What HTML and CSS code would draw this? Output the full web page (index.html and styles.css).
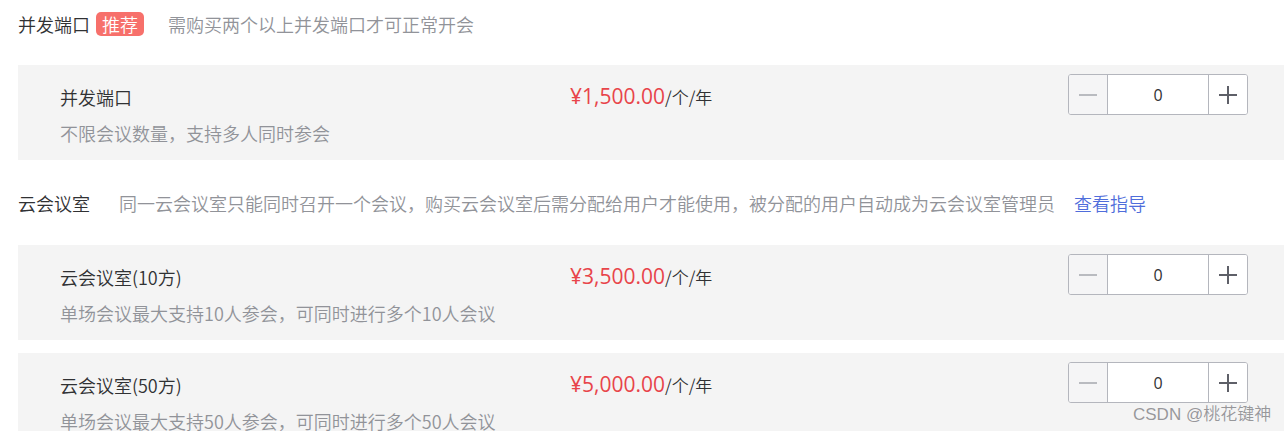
FILE: index.html
```html
<!DOCTYPE html>
<html>
<head lang="zh-CN">
    <meta charset="UTF-8">
    <title>购买配置</title>
    <link rel="stylesheet" href="styles.css">
</head>
<body>
<div class="page">
    <div class="group-head first">
        <span class="group-title">并发端口</span>
        <span class="tag">推荐</span>
        <span class="group-tip tip-port">需购买两个以上并发端口才可正常开会</span>
    </div>
    <div class="item">
        <div class="item-info">
            <div class="item-name">并发端口</div>
            <div class="item-desc">不限会议数量，支持多人同时参会</div>
        </div>
        <div class="item-price"><span class="money">¥1,500.00</span>/个/年</div>
        <div class="stepper">
            <span class="step minus"></span>
            <input class="step-input" type="text" value="0">
            <span class="step plus"></span>
        </div>
    </div>

    <div class="group-head">
        <span class="group-title">云会议室</span>
        <span class="group-tip tip-room">同一云会议室只能同时召开一个会议，购买云会议室后需分配给用户才能使用，被分配的用户自动成为云会议室管理员</span>
        <a class="guide" href="#">查看指导</a>
    </div>
    <div class="item">
        <div class="item-info">
            <div class="item-name">云会议室(10方)</div>
            <div class="item-desc">单场会议最大支持10人参会，可同时进行多个10人会议</div>
        </div>
        <div class="item-price"><span class="money">¥3,500.00</span>/个/年</div>
        <div class="stepper">
            <span class="step minus"></span>
            <input class="step-input" type="text" value="0">
            <span class="step plus"></span>
        </div>
    </div>
    <div class="item">
        <div class="item-info">
            <div class="item-name">云会议室(50方)</div>
            <div class="item-desc">单场会议最大支持50人参会，可同时进行多个50人会议</div>
        </div>
        <div class="item-price"><span class="money">¥5,000.00</span>/个/年</div>
        <div class="stepper">
            <span class="step minus"></span>
            <input class="step-input" type="text" value="0">
            <span class="step plus"></span>
        </div>
    </div>
</div>
<div class="watermark">CSDN @桃花键神</div>
</body>
</html>
```

FILE: styles.css
```css
html, body {
    margin: 0;
    padding: 0;
    background-color: #ffffff;
    overflow: hidden;
}

body {
    font-family: "Noto Sans CJK SC", "Liberation Sans", sans-serif;
    font-weight: 350;
    color: #303133;
    font-size: 18px;
}

.page {
    padding-left: 18px;
}

.group-head {
    display: flex;
    align-items: center;
    height: 48px;
    margin-top: 19px;
    margin-bottom: 18px;
    line-height: 24px;
}

.group-head.first {
    margin-top: 0;
    margin-bottom: 17px;
}

.group-title {
    color: #303133;
}

.tag {
    margin-left: 6px;
    padding: 0 6px;
    height: 24px;
    line-height: 24px;
    border-radius: 5px;
    background-color: #f7706b;
    color: #ffffff;
}

.group-tip {
    color: #919399;
}

.tip-port {
    margin-left: 24px;
}

.tip-room {
    margin-left: 29px;
}

.guide {
    margin-left: 19px;
    color: #4f6ddb;
    text-decoration: none;
}

.item {
    display: flex;
    align-items: flex-start;
    height: 95px;
    box-sizing: border-box;
    padding: 0 36px 0 42px;
    margin-bottom: 13px;
    background-color: #f4f4f4;
}

.item-info {
    width: 510px;
    padding-top: 20px;
}

.item-name {
    line-height: 24px;
    color: #303133;
}

.item-desc {
    margin-top: 12px;
    line-height: 24px;
    color: #919399;
}

.item-price {
    flex: 1;
    padding-top: 18px;
    line-height: 27px;
    font-size: 17px;
    color: #303133;
}

.money {
    font-family: "Open Sans", "Liberation Sans", sans-serif;
    font-weight: 400;
    font-size: 21px;
    color: #e8444a;
}

.stepper {
    display: flex;
    margin-top: 9px;
    height: 41px;
    border: 1px solid #b4b6bd;
    border-radius: 3px;
    box-sizing: border-box;
    background-color: #ffffff;
    overflow: hidden;
}

.step {
    position: relative;
    width: 38px;
    background-color: #f5f5f6;
}

.step::before,
.step::after {
    content: "";
    position: absolute;
    left: 50%;
    top: 50%;
    background-color: #5e6068;
}

.step::before {
    width: 18px;
    height: 2px;
    margin: -1px 0 0 -9px;
}

.step.plus::after {
    width: 2px;
    height: 18px;
    margin: -9px 0 0 -1px;
}

.minus {
    border-right: 1px solid #b4b6bd;
}

.minus::before {
    background-color: #b9bbc0;
}

.plus {
    background-color: #ffffff;
    border-left: 1px solid #b4b6bd;
}

.step-input {
    width: 100px;
    border: 0;
    padding: 0;
    outline: none;
    text-align: center;
    font-family: "Open Sans", "Liberation Sans", sans-serif;
    font-size: 16px;
    color: #303133;
    background-color: #ffffff;
}

.watermark {
    position: absolute;
    left: 1133px;
    top: 400px;
    font-size: 17px;
    color: rgba(120, 120, 125, 0.75);
    font-family: "Liberation Sans", "Noto Sans CJK SC", sans-serif;
}
```
